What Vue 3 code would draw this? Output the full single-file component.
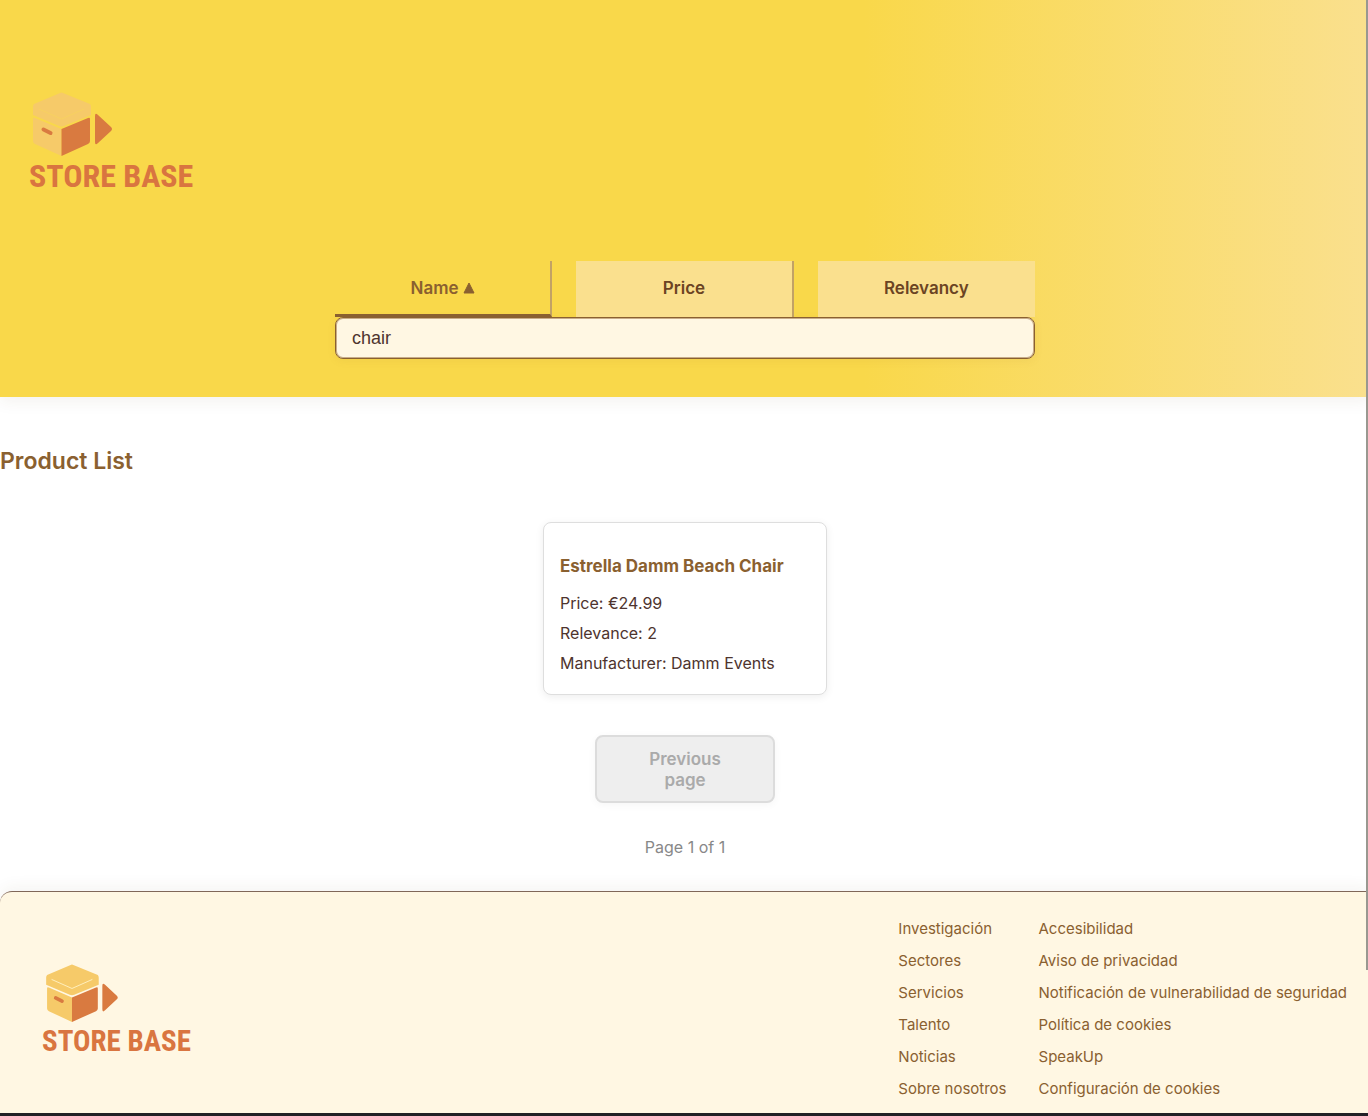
<script setup>
import { ref } from 'vue'

const query = ref('chair')
const active = ref('Name')
const sorts = ['Name', 'Price', 'Relevancy']

const product = {
  name: 'Estrella Damm Beach Chair',
  price: '€24.99',
  relevance: 2,
  manufacturer: 'Damm Events',
}

const linkColumns = [
  ['Investigación', 'Sectores', 'Servicios', 'Talento', 'Noticias', 'Sobre nosotros'],
  [
    'Accesibilidad',
    'Aviso de privacidad',
    'Notificación de vulnerabilidad de seguridad',
    'Política de cookies',
    'SpeakUp',
    'Configuración de cookies',
  ],
]
</script>

<template>
  <div class="page">
    <header class="header">
      <a class="logo" href="#">
        <svg class="logo-mark" viewBox="0 0 80 64" aria-hidden="true">
          <path class="box-light" d="M28 1 Q29.500 0 31 1 L58 12 Q59 13 59 15 V23 L32 34 Q29.500 35 27 34 L1 23 V15 Q1 13 2 12 Z" />
          <path class="lid-line soft" d="M7 17 L29.500 27 L52 17" />
          <path class="box-light" d="M1 27 Q1 25 3 26 L29.500 37 V64 L3 52 Q1 51 1 49 Z" />
          <path class="box-dark" d="M29.500 37 L56 26 Q58 25 58 27 V49 Q58 51 56 52 L29.500 64 Z" />
          <path class="handle" d="M11.500 37.500 L18.500 41" />
          <path class="box-dark" d="M63 24 Q63 20 66 23 L79 35 Q81 37 79 39 L66 51 Q63 54 63 50 Z" />
        </svg>
        <span class="logo-text">STORE BASE</span>
      </a>
      <form class="search" @submit.prevent>
        <div class="sorts">
          <button
            v-for="s in sorts"
            :key="s"
            type="button"
            class="sort"
            :class="{ active: active === s }"
            @click="active = s"
          >
            {{ s }}
            <svg v-if="active === s" class="arrow" viewBox="0 0 12 12" aria-hidden="true">
              <path d="M6 1 L11 11 H1 Z" />
            </svg>
          </button>
        </div>
        <input v-model="query" class="query" type="text" aria-label="Search products" />
      </form>
    </header>

    <main class="main">
      <h2 class="heading">Product List</h2>
      <article class="card">
        <h3>{{ product.name }}</h3>
        <p>Price: {{ product.price }}</p>
        <p>Relevance: {{ product.relevance }}</p>
        <p>Manufacturer: {{ product.manufacturer }}</p>
      </article>
      <button class="previous" type="button" disabled>Previous page</button>
      <p class="count">Page 1 of 1</p>
    </main>

    <footer class="footer">
      <a class="logo small" href="#">
        <svg class="logo-mark" viewBox="0 0 80 64" aria-hidden="true">
          <path class="box-light" d="M28 1 Q29.500 0 31 1 L58 12 Q59 13 59 15 V23 L32 34 Q29.500 35 27 34 L1 23 V15 Q1 13 2 12 Z" />
          <path class="lid-line" d="M7 17 L29.500 27 L52 17" />
          <path class="box-light" d="M2 27 Q2 25 4 26 L29.500 37 V64 L4 52 Q2 51 2 49 Z" />
          <path class="box-dark" d="M29.500 37 L56 26 Q58 25 58 27 V49 Q58 51 56 52 L29.500 64 Z" />
          <path class="handle" d="M11.500 37.500 L18.500 41" />
          <path class="box-dark" d="M63 24 Q63 20 66 23 L79 35 Q81 37 79 39 L66 51 Q63 54 63 50 Z" />
        </svg>
        <span class="logo-text">STORE BASE</span>
      </a>
      <nav class="links" aria-label="Footer">
        <ul v-for="(column, i) in linkColumns" :key="i">
          <li v-for="label in column" :key="label"><a href="#">{{ label }}</a></li>
        </ul>
      </nav>
    </footer>
    <div class="scroll-thumb"></div>
  </div>
</template>

<style>
html {
  background: #222226;
}
body {
  margin: 0;
  overflow-x: hidden;
}
</style>

<style scoped>
.page {
  position: relative;
  width: calc(100% + 2px);
  margin-bottom: 3px;
  background: #fff;
  color: #4e342e;
  font-family: Inter, "Liberation Sans", sans-serif;
  font-size: 16px;
}
.header {
  position: relative;
  display: flex;
  flex-direction: column;
  gap: 69px;
  padding: 92px 29px 38px;
  background: linear-gradient(90deg, #f9d84a 63%, #fae08e 100%);
  box-shadow: 0 4px 16px rgba(80, 60, 30, 0.07);
}
.logo {
  display: flex;
  flex-direction: column;
  align-self: flex-start;
  color: #d97540;
  text-decoration: none;
}
.logo-mark {
  width: 80px;
  height: 64px;
  margin-left: 3px;
}
.logo-text {
  margin-top: 4px;
  font-family: "Roboto Condensed", "Liberation Sans Narrow", Roboto, sans-serif;
  font-size: 32px;
  font-weight: 700;
  line-height: 32px;
  white-space: nowrap;
}
.box-light {
  fill: #f6ca69;
}
.box-dark {
  fill: #d97a40;
}
.lid-line {
  fill: none;
  stroke: #fff2c4;
  stroke-width: 1;
}
.lid-line.soft {
  stroke: #f8d160;
}
.handle {
  fill: none;
  stroke: #d97a40;
  stroke-width: 4;
  stroke-linecap: round;
}
.search {
  align-self: center;
  width: 100%;
  max-width: 700px;
}
.sorts {
  display: grid;
  grid-template-columns: repeat(3, 1fr);
  gap: 24px;
}
.sort {
  height: 56px;
  padding: 0 0 3px;
  border: 0;
  border-right: 2px solid #c2a265;
  background: #fae08e;
  color: #6b4423;
  font: 600 17px/20px Inter, sans-serif;
}
.sort:last-child {
  border-right: 0;
}
.sort.active {
  padding: 0;
  background: transparent;
  border-bottom: 3px solid #8a6030;
  color: #8a6030;
}
.arrow {
  width: 12px;
  height: 12px;
  fill: #8a6030;
  stroke: #8a6030;
  stroke-linejoin: round;
}
.query {
  display: block;
  box-sizing: border-box;
  width: 100%;
  height: 42px;
  padding: 0 16px;
  border: 1px solid #8a6030;
  border-radius: 8px;
  outline: 0;
  background: #fff7e3;
  box-shadow: inset 0 0 0 1px #c9ad88, 0 2px 8px rgba(138, 96, 48, 0.08);
  color: #4e342e;
  font: 18px "Liberation Sans", Arial, sans-serif;
}
.main {
  display: flex;
  flex-direction: column;
  align-items: center;
  padding: 49px 0 32px;
}
.heading {
  align-self: flex-start;
  margin: 0 0 46px;
  color: #8a6030;
  font-size: 23px;
  font-weight: 600;
  line-height: 30px;
}
.card {
  box-sizing: border-box;
  width: 284px;
  padding: 32px 16px 16px;
  border: 1px solid #dedede;
  border-radius: 8px;
  background: #fff;
  box-shadow: 0 2px 8px rgba(0, 0, 0, 0.07);
}
.card h3 {
  margin: 0 0 11px;
  color: #8a6030;
  font-size: 17px;
  font-weight: 700;
  line-height: 22px;
}
.card p {
  margin: 0;
  line-height: 30px;
}
.previous {
  width: 180px;
  margin: 40px 0 32px;
  padding: 12px 40px 10px;
  border: 2px solid #dcdcdc;
  border-radius: 8px;
  background: #eee;
  box-shadow: 0 2px 8px rgba(0, 0, 0, 0.04);
  color: #aaa;
  font: 600 17px/21px Inter, sans-serif;
}
.count {
  margin: 0;
  color: #888;
  line-height: 24px;
}
.footer {
  display: flex;
  align-items: flex-start;
  justify-content: space-between;
  padding: 20px 23px 9px 42px;
  border-top: 1px solid #806759;
  border-radius: 12px 0 0 0;
  background: #fff7e3;
  box-shadow: 0 -4px 16px rgba(80, 60, 30, 0.06);
}
.logo.small {
  margin-top: 52px;
}
.small .logo-mark {
  width: 73px;
  height: 58px;
}
.small .logo-text {
  margin-top: 3px;
  font-size: 29px;
}
.links {
  display: flex;
  gap: 32px;
}
.links ul {
  margin: 0;
  padding: 0;
  list-style: none;
}
.links li {
  height: 32px;
  line-height: 32px;
}
.links a {
  color: #8a6030;
  font-size: 15px;
  font-weight: 400;
  text-decoration: none;
  white-space: nowrap;
}
.scroll-thumb {
  position: absolute;
  top: 0;
  right: 2px;
  width: 2px;
  height: 970px;
  background: #999890;
}
</style>
